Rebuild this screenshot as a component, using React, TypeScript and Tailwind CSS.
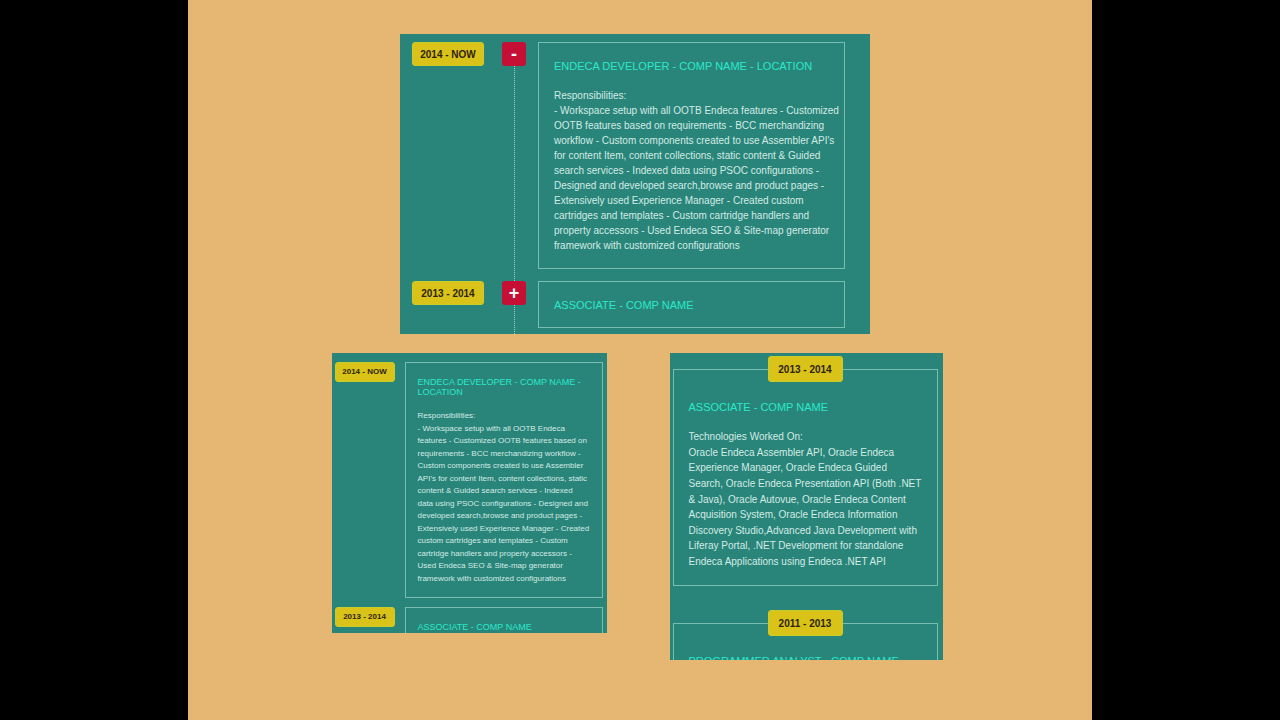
import { useState } from "react";
import clsx from "clsx";

const DEVELOPER_WIDE = [
  "Responsibilities:",
  "- Workspace setup with all OOTB Endeca features - Customized",
  "OOTB features based on requirements - BCC merchandizing",
  "workflow - Custom components created to use Assembler API's",
  "for content Item, content collections, static content & Guided",
  "search services - Indexed data using PSOC configurations -",
  "Designed and developed search,browse and product pages -",
  "Extensively used Experience Manager - Created custom",
  "cartridges and templates - Custom cartridge handlers and",
  "property accessors - Used Endeca SEO & Site-map generator",
  "framework with customized configurations",
];

const DEVELOPER_NARROW = [
  "Responsibilities:",
  "- Workspace setup with all OOTB Endeca",
  "features - Customized OOTB features based on",
  "requirements - BCC merchandizing workflow -",
  "Custom components created to use Assembler",
  "API's for content Item, content collections, static",
  "content & Guided search services - Indexed",
  "data using PSOC configurations - Designed and",
  "developed search,browse and product pages -",
  "Extensively used Experience Manager - Created",
  "custom cartridges and templates - Custom",
  "cartridge handlers and property accessors -",
  "Used Endeca SEO & Site-map generator",
  "framework with customized configurations",
];

const ASSOCIATE = [
  "Technologies Worked On:",
  "Oracle Endeca Assembler API, Oracle Endeca",
  "Experience Manager, Oracle Endeca Guided",
  "Search, Oracle Endeca Presentation API (Both .NET",
  "& Java), Oracle Autovue, Oracle Endeca Content",
  "Acquisition System, Oracle Endeca Information",
  "Discovery Studio,Advanced Java Development with",
  "Liferay Portal, .NET Development for standalone",
  "Endeca Applications using Endeca .NET API",
];

function Lines({ lines, className }: { lines: string[]; className: string }) {
  return (
    <p className={clsx("flex flex-col justify-between whitespace-nowrap text-[#d3ebe5]", className)}>
      {lines.map((line) => (
        <span key={line}>{line}</span>
      ))}
    </p>
  );
}

function YearBadge({ years, className }: { years: string; className: string }) {
  return (
    <div
      className={clsx(
        "flex shrink-0 items-center justify-center rounded-[3px] border border-[#c9cc2b] bg-[#dac318] font-bold whitespace-nowrap text-[#2e2410]",
        className
      )}
    >
      {years}
    </div>
  );
}

function ToggleButton({ open, onClick }: { open: boolean; onClick: () => void }) {
  return (
    <button
      onClick={onClick}
      aria-expanded={open}
      className="flex h-6 w-6 items-center justify-center rounded-[3px] bg-[#c50f35] text-[18px] leading-4 font-bold text-white"
    >
      {open ? "-" : "+"}
    </button>
  );
}

function DesktopTimeline() {
  const [open, setOpen] = useState([true, false]);

  function toggle(i: number) {
    setOpen(open.map((v, j) => (j === i ? !v : v)));
  }

  const items = [
    { years: "2014 - NOW", title: "ENDECA DEVELOPER - COMP NAME - LOCATION", lines: DEVELOPER_WIDE },
    { years: "2013 - 2014", title: "ASSOCIATE - COMP NAME", lines: ASSOCIATE },
  ];

  return (
    <section className="h-[300px] w-[470px] overflow-hidden bg-[#298579] pt-2 pr-[25px] pl-3">
      {items.map((item, i) => (
        <div key={item.years} className="flex">
          <YearBadge years={item.years} className="h-6 w-[72px] text-[10px]" />
          <div className="ml-[18px] flex w-6 shrink-0 flex-col items-center">
            <ToggleButton open={open[i]} onClick={() => toggle(i)} />
            <div className="flex-1 border-l border-dotted border-[#a5d0c8]" />
          </div>
          <div className="mb-3 ml-3 min-w-0 flex-1 border border-[#79bdb0] px-[15px] pt-4 pb-[15px]">
            <h2 className="text-[11px] leading-[14px] whitespace-nowrap text-[#2be8cb]">{item.title}</h2>
            {open[i] && <Lines lines={item.lines} className="mt-[15px] text-[10px] leading-[15px]" />}
          </div>
        </div>
      ))}
    </section>
  );
}

function TabletTimeline() {
  return (
    <section className="h-[280px] w-[275px] overflow-hidden bg-[#298579] pt-[9px] pr-1 pl-[3px]">
      <div className="flex">
        <YearBadge years="2014 - NOW" className="h-5 w-[60px] text-[8px]" />
        <div className="mb-[9px] ml-[10px] h-[236px] flex-1 border border-[#79bdb0] px-3 pt-[14px]">
          <h2 className="text-[9px] leading-[10px] text-[#2be8cb]">
            ENDECA DEVELOPER - COMP NAME -<br />
            LOCATION
          </h2>
          <Lines lines={DEVELOPER_NARROW} className="mt-[13px] h-[175px] text-[8px] leading-3" />
        </div>
      </div>
      <div className="flex">
        <YearBadge years="2013 - 2014" className="h-5 w-[60px] text-[8px]" />
        <div className="ml-[10px] h-12 flex-1 border border-[#79bdb0] px-3 pt-[14px]">
          <h2 className="text-[9px] leading-[10px] text-[#2be8cb]">ASSOCIATE - COMP NAME</h2>
        </div>
      </div>
    </section>
  );
}

function MobileTimeline() {
  return (
    <section className="h-[307px] w-[273px] overflow-hidden bg-[#298579] pt-4 pr-[5px] pl-[3px]">
      <div className="flex h-[217px] flex-col border border-[#79bdb0] px-[15px]">
        <YearBadge years="2013 - 2014" className="-mt-[14px] h-[26px] w-[75px] self-center text-[10px]" />
        <h2 className="mt-[18px] text-[11px] leading-[14px] text-[#2be8cb]">ASSOCIATE - COMP NAME</h2>
        <Lines lines={ASSOCIATE} className="mt-[15px] h-[140px] text-[10px] leading-[15px]" />
      </div>
      <div className="mt-[37px] flex h-[217px] flex-col border border-[#79bdb0] px-[15px]">
        <YearBadge years="2011 - 2013" className="-mt-[14px] h-[26px] w-[75px] self-center text-[10px]" />
        <h2 className="mt-[18px] text-[11px] leading-[14px] whitespace-nowrap text-[#2be8cb]">
          PROGRAMMER ANALYST - COMP NAME
        </h2>
      </div>
    </section>
  );
}

export default function App() {
  return (
    <div className="flex min-h-screen justify-center bg-black font-['Liberation_Sans',Arial,sans-serif]">
      <main className="flex w-full max-w-[904px] flex-col items-center bg-[#e6b772] pt-[34px] pr-[10px]">
        <DesktopTimeline />
        <div className="mt-[19px] ml-1 flex items-start gap-[63px]">
          <TabletTimeline />
          <MobileTimeline />
        </div>
      </main>
    </div>
  );
}
